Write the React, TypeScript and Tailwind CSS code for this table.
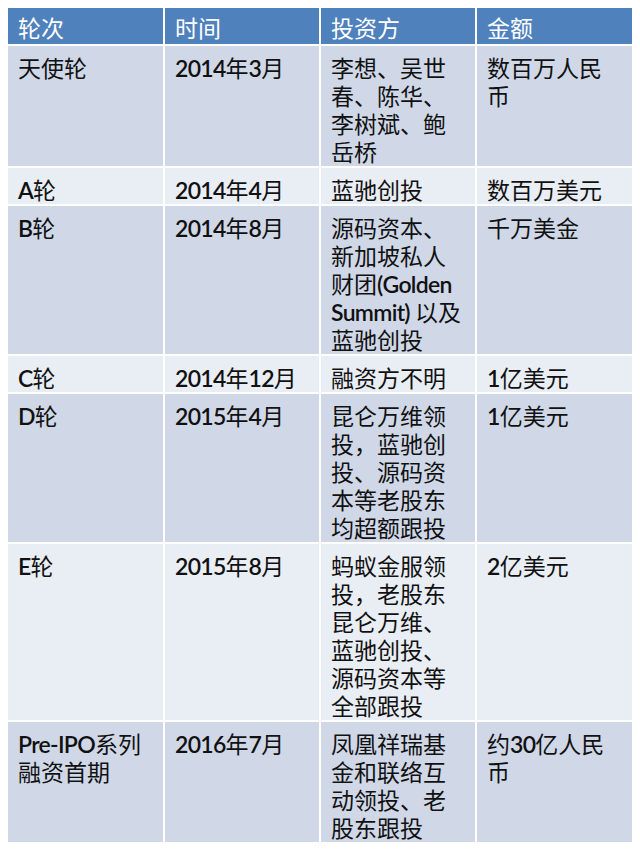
type Row = {
  round: string[];
  date: string;
  investors: string[];
  amount: string[];
};

const ROWS: Row[] = [
  {
    round: ["天使轮"],
    date: "2014年3月",
    investors: ["李想、吴世", "春、陈华、", "李树斌、鲍", "岳桥"],
    amount: ["数百万人民", "币"],
  },
  { round: ["A轮"], date: "2014年4月", investors: ["蓝驰创投"], amount: ["数百万美元"] },
  {
    round: ["B轮"],
    date: "2014年8月",
    investors: ["源码资本、", "新加坡私人", "财团(Golden", "Summit) 以及", "蓝驰创投"],
    amount: ["千万美金"],
  },
  { round: ["C轮"], date: "2014年12月", investors: ["融资方不明"], amount: ["1亿美元"] },
  {
    round: ["D轮"],
    date: "2015年4月",
    investors: ["昆仑万维领", "投，蓝驰创", "投、源码资", "本等老股东", "均超额跟投"],
    amount: ["1亿美元"],
  },
  {
    round: ["E轮"],
    date: "2015年8月",
    investors: ["蚂蚁金服领", "投，老股东", "昆仑万维、", "蓝驰创投、", "源码资本等", "全部跟投"],
    amount: ["2亿美元"],
  },
  {
    round: ["Pre-IPO系列", "融资首期"],
    date: "2016年7月",
    investors: ["凤凰祥瑞基", "金和联络互", "动领投、老", "股东跟投"],
    amount: ["约30亿人民", "币"],
  },
];

// latin runs (digits, names) are set heavier than the CJK text, like Calibri in the slide
function Mixed({ text }: { text: string }) {
  const parts = text.split(/([A-Za-z0-9()\-. ]+)/).filter(Boolean);
  return (
    <>
      {parts.map((p, i) =>
        /^[A-Za-z0-9()\-. ]+$/.test(p) ? (
          <span key={i} className="font-semibold tracking-[-0.7px]">
            {p}
          </span>
        ) : (
          <span key={i}>{p}</span>
        ),
      )}
    </>
  );
}

function Cell({ lines, dark }: { lines: string[]; dark: boolean }) {
  return (
    <div className={`pl-[10px] pt-[8px] pb-0 ${dark ? "bg-[#d0d8e8]" : "bg-[#e9edf4]"}`}>
      {lines.map((l, i) => (
        <div key={i} className="whitespace-nowrap">
          <Mixed text={l} />
        </div>
      ))}
    </div>
  );
}

export default function App() {
  return (
    <div className="w-[640px] h-[851px] bg-white px-[8px] pt-[8px] font-['Lato','Noto_Sans_CJK_SC',sans-serif] text-[23px] leading-[28px] text-[#111]">
      <div className="grid grid-cols-[155px_154px_154px_155px] gap-[2px]">
        {["轮次", "时间", "投资方", "金额"].map((h) => (
          <div key={h} className="bg-[#4f81bd] pl-[10px] pt-[6px] pb-[2px] text-white">
            {h}
          </div>
        ))}
        {ROWS.map((r, i) => {
          const dark = i % 2 === 0;
          return [
            <Cell key={`r${i}`} lines={r.round} dark={dark} />,
            <Cell key={`d${i}`} lines={[r.date]} dark={dark} />,
            <Cell key={`v${i}`} lines={r.investors} dark={dark} />,
            <Cell key={`a${i}`} lines={r.amount} dark={dark} />,
          ];
        })}
      </div>
    </div>
  );
}
